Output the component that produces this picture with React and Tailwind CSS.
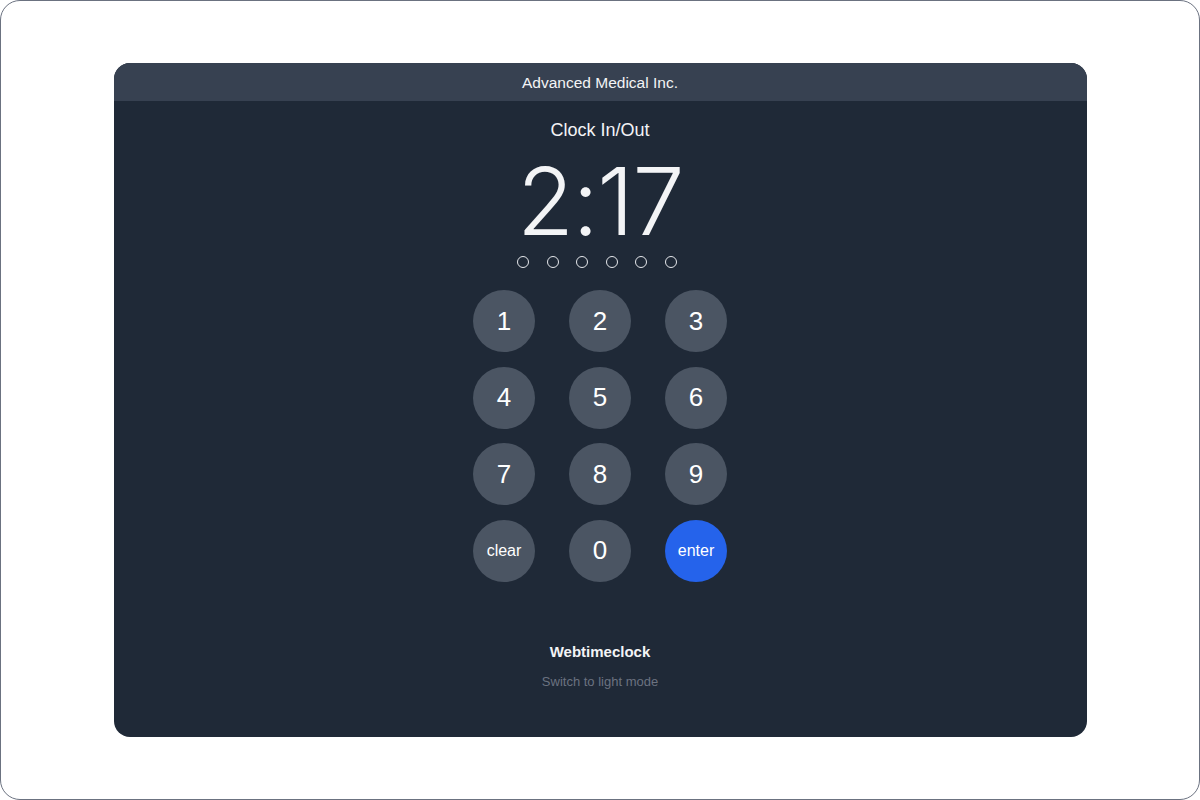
import React from 'react';

const keys = ['1', '2', '3', '4', '5', '6', '7', '8', '9'];

function Key({ label, small, primary }) {
    return (
        <button
            className={`w-[62px] h-[62px] rounded-full flex items-center justify-center text-white ${primary ? 'bg-[#2563eb]' : 'bg-[#4b5563]'} ${small ? 'text-[16px]' : 'text-[26px]'}`}
        >
            {label}
        </button>
    );
}

export default function App() {
    return (
        <div
            className="w-[1200px] h-[800px] bg-white border border-[#6b7280] rounded-[20px] flex items-center justify-center"
            style={{ fontFamily: '"Liberation Sans", Arial, sans-serif' }}
        >
            <div className="w-[973px] h-[674px] bg-[#1f2937] rounded-[16px] overflow-hidden flex flex-col">
                {/* Header */}
                <div className="h-[38px] bg-[#374151] flex items-center justify-center text-[15.5px] text-[#f3f4f6] pt-[1px]">
                    Advanced Medical Inc.
                </div>

                <div className="flex flex-col items-center">
                    <div className="mt-[16px] text-[18px] font-medium text-[#f3f4f6] leading-[26px]">Clock In/Out</div>

                    <div
                        className="text-[93px] leading-[84px] font-light text-[#f3f4f6] mt-[16px] mb-[-2px]"
                        style={{ fontFamily: 'Inter, "Liberation Sans", sans-serif', letterSpacing: '-1.5px' }}
                    >
                        2:17
                    </div>

                    {/* PIN dots */}
                    <div className="flex gap-[17.5px] mt-[15px] mr-[6px]">
                        {[0, 1, 2, 3, 4, 5].map(i => (
                            <div key={i} className="w-[12px] h-[12px] rounded-full border border-[#e5e7eb]" />
                        ))}
                    </div>

                    {/* Keypad */}
                    <div className="grid grid-cols-3 gap-x-[34px] gap-y-[14.5px] mt-[22px]">
                        {keys.map(k => <Key key={k} label={k} />)}
                        <Key label="clear" small />
                        <Key label="0" />
                        <Key label="enter" small primary />
                    </div>

                    <div className="mt-[59px] text-[15px] font-semibold text-[#f3f4f6] leading-[22px]">Webtimeclock</div>
                    <div className="mt-[9px] text-[13px] text-[#6b7280]">Switch to light mode</div>
                </div>
            </div>
        </div>
    );
}
